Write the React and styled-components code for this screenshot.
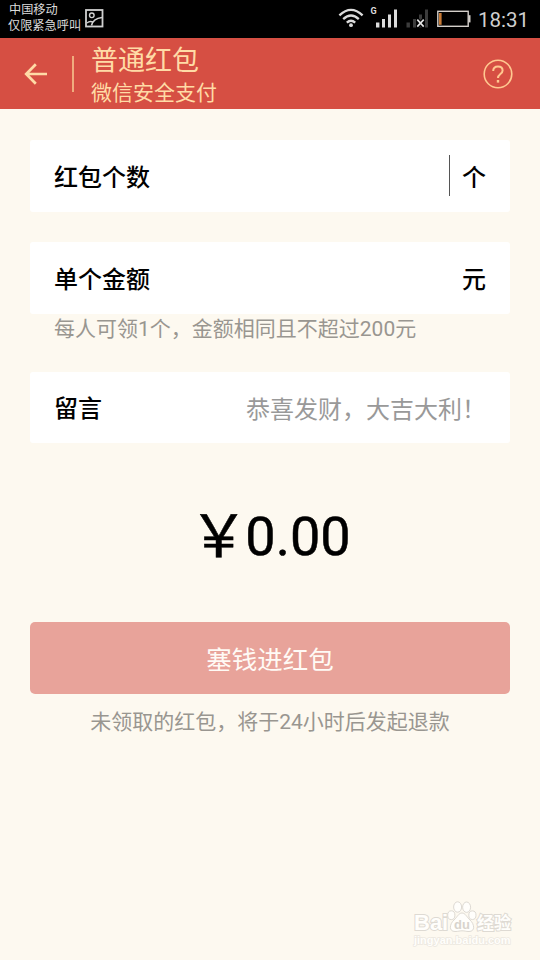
import React from 'react';
import styled, { createGlobalStyle } from 'styled-components';

const App = () => {
  return (
    <Screen>
      <GlobalStyle />
      <StatusBar>
        <Carrier>
          <CarrierLine $indent={1}>中国移动</CarrierLine>
          <CarrierLine>仅限紧急呼叫</CarrierLine>
        </Carrier>
        <PictureIcon />
        <StatusIcons>
          <WifiIcon />
          <SignalIcon />
          <NoSignalIcon />
          <BatteryIcon />
        </StatusIcons>
        <Clock>18:31</Clock>
      </StatusBar>

      <Header>
        <BackIcon />
        <Divider />
        <Titles>
          <Title>普通红包</Title>
          <Subtitle>微信安全支付</Subtitle>
        </Titles>
        <HelpIcon />
      </Header>

      <Form>
        <Field>
          <Label>红包个数</Label>
          <Value>
            <Caret />
            <Label as="span">个</Label>
          </Value>
        </Field>
        <Field $top={30}>
          <Label>单个金额</Label>
          <Label as="span">元</Label>
        </Field>
        <Hint>每人可领1个，金额相同且不超过200元</Hint>
        <Field $top={28} $height={71}>
          <Label>留言</Label>
          <Placeholder>恭喜发财，大吉大利！</Placeholder>
        </Field>
        <Amount>
          <Yen>￥</Yen>
          <span>0.00</span>
        </Amount>
        <SubmitButton>塞钱进红包</SubmitButton>
        <FootNote>未领取的红包，将于24小时后发起退款</FootNote>
      </Form>

      <Watermark>
        <WatermarkRow>
          <Brand>Bai</Brand>
          <Paw />
          <BrandCn>经验</BrandCn>
        </WatermarkRow>
        <WatermarkUrl>jingyan.baidu.com</WatermarkUrl>
      </Watermark>
    </Screen>
  );
};

export default App;

// Icons
const PictureIcon = () => (
  <PictureSvg width="19" height="19" viewBox="0 0 19 19" fill="none" stroke="#d0d0d0">
    <rect x="1" y="1" width="16.5" height="16.5" strokeWidth="1.8" />
    <circle cx="6.8" cy="6.3" r="2.3" strokeWidth="1.4" />
    <path d="M6.5 16.5 Q8 9.5 17 8.5" strokeWidth="1.7" />
    <path d="M2 14 Q4.5 11.6 8 13" strokeWidth="1.4" />
  </PictureSvg>
);

const WifiIcon = () => (
  <svg width="26" height="20" viewBox="0 0 26 20" fill="none" stroke="#dcdcdc" strokeWidth="2.3">
    <path d="M1.4 7.4 Q13 -3.6 24.6 7.4" />
    <path d="M5.2 11.2 Q13 3.8 20.8 11.2" />
    <path d="M8.8 14.6 Q13 10.8 17.2 14.6" />
    <circle cx="13" cy="17.2" r="1.9" fill="#dcdcdc" stroke="none" />
  </svg>
);

const SignalIcon = () => (
  <svg width="29" height="24" viewBox="0 0 29 24" fill="#dcdcdc">
    <text x="0.5" y="8.5" fontSize="9" fontWeight="700" fontFamily="Roboto, sans-serif">G</text>
    <rect x="6" y="17.5" width="3.4" height="5" />
    <rect x="12" y="14" width="3" height="8.5" />
    <rect x="18" y="9.5" width="3" height="13" />
    <rect x="24" y="4.5" width="3" height="18" />
  </svg>
);

const NoSignalIcon = () => (
  <svg width="23" height="24" viewBox="0 0 23 24" fill="#3c3c3c">
    <rect x="0.5" y="17.5" width="3.4" height="5" />
    <rect x="7" y="14" width="3" height="8.5" />
    <rect x="13" y="9.5" width="3" height="13" />
    <rect x="19" y="4.5" width="3" height="18" />
    <path d="M11.3 14.6 L17.7 21.6 M17.7 14.6 L11.3 21.6" stroke="#000" strokeWidth="4" />
    <path d="M11.3 14.6 L17.7 21.6 M17.7 14.6 L11.3 21.6" stroke="#e4e4e4" strokeWidth="1.6" />
  </svg>
);

const BatteryIcon = () => (
  <svg width="34" height="18" viewBox="0 0 34 18">
    <rect x="0.8" y="1.3" width="30.4" height="15" fill="none" stroke="#d4cfca" strokeWidth="1.4" />
    <rect x="2" y="3" width="2.6" height="11.8" fill="#c87a35" />
    <rect x="31.5" y="5.2" width="2" height="7.2" fill="#d4cfca" />
  </svg>
);

const BackIcon = () => (
  <svg width="24" height="22" viewBox="0 0 24 22" fill="none" stroke="#ffdba6" strokeWidth="2.7">
    <path d="M2.2 11 H23 M11.8 1.2 L2.2 11 L11.8 20.8" />
  </svg>
);

const HelpIcon = () => (
  <svg width="30" height="30" viewBox="0 0 30 30" fill="none" stroke="#ffc890">
    <circle cx="15" cy="15" r="13.8" strokeWidth="1.6" />
    <path d="M10.2 12 Q10.2 7.4 15 7.4 Q19.6 7.4 19.6 11.4 Q19.6 13.6 17.2 15.2 Q15 16.8 15 19" strokeWidth="2" />
    <rect x="13.8" y="21" width="2.4" height="2.6" fill="#ffc890" stroke="none" />
  </svg>
);

const Paw = () => (
  <svg width="30" height="32" viewBox="0 0 30 32" fill="#fffefb" stroke="#dedad3" strokeWidth="1">
    <ellipse cx="4.3" cy="14.2" rx="3.6" ry="4.4" />
    <ellipse cx="10.6" cy="6" rx="4" ry="5.2" />
    <ellipse cx="19.6" cy="6.2" rx="4" ry="5.2" />
    <ellipse cx="25.4" cy="14.2" rx="3.6" ry="4.3" />
    <path d="M15 12 C11.5 12 10.5 16 7 19 C2.5 23 1.5 30.5 8 30.5 C12 30.5 12 29.8 15 29.8 C18 29.8 18.5 30.5 22 30.5 C28.5 30.5 27.5 23 23 19 C19.5 16 18.5 12 15 12 Z" />
    <text
      x="15"
      y="27.8"
      textAnchor="middle"
      fontSize="13"
      fontWeight="700"
      fontFamily="Liberation Sans, sans-serif"
      fill="#d8d4cd"
      stroke="none"
    >
      du
    </text>
  </svg>
);

// Styled Components
const GlobalStyle = createGlobalStyle`
  * {
    box-sizing: border-box;
  }

  body {
    margin: 0;
    background: #fdf9f0;
    font-family: Roboto, "Noto Sans CJK SC", sans-serif;
  }
`;

const Screen = styled.div`
  position: relative;
  width: 540px;
  height: 960px;
  overflow: hidden;
  background: #fdf9f0;
`;

const StatusBar = styled.div`
  display: flex;
  height: 38px;
  padding: 0 11px 0 8px;
  background: #000;
  color: #dcdcdc;
`;

const Carrier = styled.div`
  width: 77px;
  padding-top: 2px;
`;

const CarrierLine = styled.div`
  height: 16px;
  line-height: 17px;
  padding-left: ${({ $indent }) => $indent || 0}px;
  font-size: 12.2px;
  white-space: nowrap;
`;

const PictureSvg = styled.svg`
  margin-top: 9px;
`;

const StatusIcons = styled.div`
  display: flex;
  align-items: flex-end;
  height: 28px;
  margin-left: auto;

  svg:nth-child(2) {
    margin-left: 6px;
    margin-bottom: -1px;
  }

  svg:nth-child(3) {
    margin-left: 7px;
    margin-bottom: -1px;
  }

  svg:nth-child(4) {
    margin-left: 8px;
  }
`;

const Clock = styled.div`
  margin-left: 7px;
  line-height: 40px;
  font-size: 20.5px;
  color: #cfcfcf;
`;

const Header = styled.div`
  display: flex;
  align-items: center;
  height: 71px;
  padding: 0 27px 0 24px;
  background: #d64f43;
  color: #ffdba6;

  > svg:last-child {
    margin-left: auto;
  }
`;

const Divider = styled.div`
  width: 2px;
  height: 36px;
  margin: 0 17px 0 24px;
  background: #f0ac7e;
`;

const Titles = styled.div`
  padding-top: 5px;
`;

const Title = styled.div`
  height: 34px;
  line-height: 34px;
  font-size: 27px;
`;

const Subtitle = styled.div`
  height: 30px;
  line-height: 30px;
  font-size: 21px;
`;

const Form = styled.div`
  display: flex;
  flex-direction: column;
  padding: 31px 30px 0;
`;

const Field = styled.div`
  display: flex;
  align-items: center;
  justify-content: space-between;
  height: ${({ $height }) => $height || 72}px;
  margin-top: ${({ $top }) => $top || 0}px;
  padding: 0 24px;
  border-radius: 3px;
  background: #fff;
`;

const Label = styled.label`
  padding-top: 3px;
  line-height: 36px;
  font-size: 24px;
  font-weight: 500;
  color: #000;
`;

const Value = styled.div`
  display: flex;
  align-items: center;
  gap: 12px;
`;

const Caret = styled.div`
  width: 1px;
  height: 41px;
  margin-bottom: 2px;
  background: #555;
`;

const Placeholder = styled.span`
  font-size: 24px;
  color: #999;
`;

const Hint = styled.div`
  height: 30px;
  padding-left: 24px;
  line-height: 30px;
  font-size: 21px;
  color: #999690;
`;

const Amount = styled.div`
  display: flex;
  justify-content: center;
  height: 80px;
  margin-top: 54px;
  padding-left: 2px;
  line-height: 80px;
  font-size: 54px;
  color: #000;
  -webkit-text-stroke: 0.5px #000;
`;

const Yen = styled.span`
  width: 56px;
  margin-left: -2px;
  font-size: 59px;
`;

const SubmitButton = styled.button`
  height: 72px;
  margin-top: 45px;
  padding: 0 0 2px;
  border: none;
  border-radius: 5px;
  background: #e8a39a;
  color: #fffaf5;
  font-family: inherit;
  font-size: 25.5px;
`;

const FootNote = styled.div`
  margin-top: 13px;
  line-height: 30px;
  text-align: center;
  font-size: 21px;
  color: #999690;
`;

const Watermark = styled.div`
  position: absolute;
  left: 414px;
  top: 901px;
  width: 98px;
  color: #fffefb;
  font-family: "Liberation Sans", "Noto Sans CJK SC", sans-serif;
  font-weight: 700;
`;

const WatermarkRow = styled.div`
  display: flex;
  align-items: flex-end;
  height: 32px;
`;

const Brand = styled.span`
  width: 33px;
  line-height: 20px;
  font-size: 22px;
  -webkit-text-stroke: 2px #dedad3;
  paint-order: stroke fill;
`;

const BrandCn = styled.span`
  line-height: 19px;
  font-size: 17px;
  white-space: nowrap;
  -webkit-text-stroke: 2px #dedad3;
  paint-order: stroke fill;
`;

const WatermarkUrl = styled.div`
  line-height: 15px;
  font-size: 11px;
  -webkit-text-stroke: 1.5px #ece8e0;
  paint-order: stroke fill;
`;
